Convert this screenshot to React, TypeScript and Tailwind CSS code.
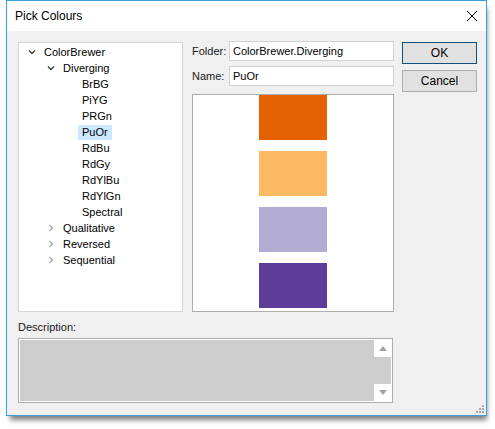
import React from "react";

const font = { fontFamily: '"Liberation Sans", Arial, sans-serif' };

function ChevDown() {
  return (
    <svg width="14" height="16" viewBox="0 0 14 16">
      <path d="M4 6.5 L7 9.5 L10 6.5" fill="none" stroke="#404040" strokeWidth="1.4" />
    </svg>
  );
}
function ChevRight() {
  return (
    <svg width="14" height="16" viewBox="0 0 14 16">
      <path d="M5.5 5 L8.5 8 L5.5 11" fill="none" stroke="#a6a6a6" strokeWidth="1.4" />
    </svg>
  );
}

function Row({ level, label, open, leaf, selected }: { level: number; label: string; open?: boolean; leaf?: boolean; selected?: boolean }) {
  if (leaf) {
    return (
      <div className="h-[16px] flex items-center pl-[59px]">
        <span className={"h-[15px] flex items-center px-[4px] " + (selected ? "bg-[#cce8ff]" : "")}>{label}</span>
      </div>
    );
  }
  return (
    <div className={"h-[16px] flex items-center " + (level === 0 ? "pl-[6px]" : "pl-[25px]")}>
      {open ? <ChevDown /> : <ChevRight />}
      <span className="ml-[5px]">{label}</span>
    </div>
  );
}

export default function App() {
  const swatches = ["#e66101", "#fdb863", "#b2abd2", "#5e3c99"];
  return (
    <div className="w-[495px] h-[429px] bg-white" style={font}>
      <div className="ml-[6px] w-[481px] h-[416px] border border-[#3c9de3] bg-[#f0f0f0] flex flex-col shadow-[2px_6px_5px_-2px_rgba(0,0,0,0.5)]">
        <div className="h-[30px] bg-white flex items-center justify-between pl-[8px] pr-[9px] text-[12px] text-black">
          <span>Pick Colours</span>
          <svg width="10" height="10" viewBox="0 0 10 10">
            <path d="M0 0 L10 10 M10 0 L0 10" stroke="#000" strokeWidth="1" />
          </svg>
        </div>
        <div className="flex-1 relative pl-[11px] pt-[11px] text-[11px] text-black">
          <div className="flex items-start">
            <div className="w-[165px] h-[270px] border border-[#d5d5d5] bg-white pt-[1px]">
              <Row level={0} label="ColorBrewer" open />
              <Row level={1} label="Diverging" open />
              {["BrBG", "PiYG", "PRGn", "PuOr", "RdBu", "RdGy", "RdYlBu", "RdYlGn", "Spectral"].map((n) => (
                <Row key={n} level={2} label={n} leaf selected={n === "PuOr"} />
              ))}
              <Row level={1} label="Qualitative" />
              <Row level={1} label="Reversed" />
              <Row level={1} label="Sequential" />
            </div>
            <div className="ml-[9px] -mt-[1px] w-[202px] flex flex-col">
              <div className="flex items-center h-[20px]">
                <span className="w-[37px] text-[#1a1a1a]">Folder:</span>
                <div className="w-[165px] h-[20px] border border-[#d2d2d2] bg-white flex items-center pl-[3px]">ColorBrewer.Diverging</div>
              </div>
              <div className="flex items-center h-[20px] mt-[5px]">
                <span className="w-[37px] text-[#1a1a1a]">Name:</span>
                <div className="w-[165px] h-[20px] border border-[#d2d2d2] bg-white flex items-center pl-[3px]">PuOr</div>
              </div>
              <div className="mt-[8px] h-[218px] border border-[#adadad] bg-white flex flex-col items-center gap-[11px]">
                {swatches.map((c) => (
                  <div key={c} className="w-[68px] h-[45px] shrink-0" style={{ backgroundColor: c }} />
                ))}
              </div>
            </div>
            <div className="ml-[8px] w-[75px] flex flex-col">
              <div className="h-[22px] border border-[#11507f] bg-[#e1e1e1] flex items-center justify-center text-[12px]">OK</div>
              <div className="mt-[6px] h-[22px] border border-[#adadad] bg-[#e1e1e1] flex items-center justify-center text-[12px]">Cancel</div>
            </div>
          </div>
          <div className="mt-[8px] h-[14px] leading-[14px] text-[#1a1a1a]">Description:</div>
          <div className="mt-[4px] w-[375px] h-[65px] border border-[#adadad] bg-white p-[1px] flex">
            <div className="flex-1 bg-[#cdcdcd]" />
            <div className="w-[17px] bg-[#cdcdcd] flex flex-col justify-between">
              <div className="h-[17px] bg-white flex items-center justify-center">
                <svg width="8" height="5" viewBox="0 0 8 5"><path d="M0 5 L4 0 L8 5 Z" fill="#a3a3a3" /></svg>
              </div>
              <div className="h-[17px] bg-white flex items-center justify-center">
                <svg width="8" height="5" viewBox="0 0 8 5"><path d="M0 0 L4 5 L8 0 Z" fill="#a3a3a3" /></svg>
              </div>
            </div>
          </div>
          <div className="absolute right-[2px] bottom-[2px] w-[8px] h-[8px]">
            <svg width="8" height="8" viewBox="0 0 8 8">
              <rect x="6" y="0" width="2" height="2" fill="#a8a8a8" />
              <rect x="3" y="3" width="2" height="2" fill="#a8a8a8" />
              <rect x="6" y="3" width="2" height="2" fill="#a8a8a8" />
              <rect x="0" y="6" width="2" height="2" fill="#a8a8a8" />
              <rect x="3" y="6" width="2" height="2" fill="#a8a8a8" />
              <rect x="6" y="6" width="2" height="2" fill="#a8a8a8" />
            </svg>
          </div>
        </div>
      </div>
    </div>
  );
}
